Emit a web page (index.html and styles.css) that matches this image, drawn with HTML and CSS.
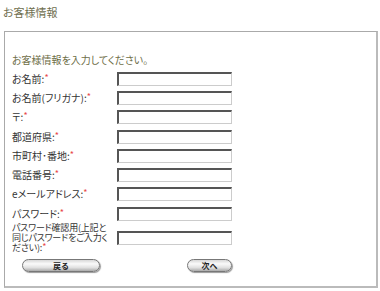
FILE: index.html
```html
<!DOCTYPE html>
<html lang="ja">
<head>
    <meta charset="UTF-8">
    <title>お客様情報</title>
    <link rel="stylesheet" href="styles.css">
</head>
<body>
    <!-- Title -->
    <h1 class="page-title">お客様情報</h1>

    <!-- Form Box -->
    <div class="form-box">
        <p class="lead">お客様情報を入力してください。</p>
        <form class="info-form">
            <div class="row">
                <label>お名前:<span class="req">*</span></label>
                <input type="text">
            </div>
            <div class="row">
                <label>お名前(フリガナ):<span class="req">*</span></label>
                <input type="text">
            </div>
            <div class="row">
                <label>〒:<span class="req">*</span></label>
                <input type="text">
            </div>
            <div class="row">
                <label>都道府県:<span class="req">*</span></label>
                <input type="text">
            </div>
            <div class="row">
                <label>市町村･番地:<span class="req">*</span></label>
                <input type="text">
            </div>
            <div class="row">
                <label>電話番号:<span class="req">*</span></label>
                <input type="text">
            </div>
            <div class="row">
                <label>eメールアドレス:<span class="req">*</span></label>
                <input type="text">
            </div>
            <div class="row">
                <label>パスワード:<span class="req">*</span></label>
                <input type="password">
            </div>
            <div class="row row-tall">
                <label class="label-long">パスワード確認用(上記と<br>同じパスワードをご入力く<br>ださい):<span class="req">*</span></label>
                <input type="password">
            </div>
            <div class="buttons">
                <button type="button" class="btn btn-back">戻る</button>
                <button type="button" class="btn btn-next">次へ</button>
            </div>
        </form>
    </div>
</body>
</html>
```

FILE: styles.css
```css
/* Reset */
* {
    margin: 0;
    padding: 0;
    box-sizing: border-box;
}

body {
    font-family: "Noto Sans CJK JP", "Noto Sans", sans-serif;
    font-feature-settings: "palt";
    background: #fff;
    color: #333;
}

/* Title */
.page-title {
    font-size: 11px;
    line-height: 12px;
    font-weight: normal;
    color: #6e6e4e;
    padding: 6px 0 0 3px;
}

/* Form Box */
.form-box {
    margin: 13px 0 0 4px;
    width: 374px;
    height: 257px;
    border-top: 1px solid #aaa;
    border-left: 1px solid #aaa;
    border-right: 2px solid #bbb;
    border-bottom: 2px solid #bbb;
    padding: 22px 0 0 7px;
}

.lead {
    font-size: 10px;
    line-height: 12px;
    color: #6e6e48;
    margin-bottom: 3px;
}

/* Rows */
.row {
    display: flex;
    align-items: center;
    height: 19.3px;
}

.row label {
    width: 105px;
    font-size: 10px;
    line-height: 10px;
    white-space: nowrap;
    color: #333;
}

.row .label-long {
    font-size: 9px;
    letter-spacing: -0.2px;
}

.row-tall {
    height: 30px;
}

.req {
    color: #e84848;
    font-size: 9px;
    line-height: 8px;
    vertical-align: top;
}

input {
    width: 115px;
    height: 14px;
    border-top: 2px solid #555;
    border-left: 2px solid #555;
    border-right: 1px solid #ccc;
    border-bottom: 1px solid #ccc;
    background: #fff;
}

/* Buttons */
.buttons {
    display: flex;
    gap: 87px;
    margin: 6px 0 0 10px;
}

.btn {
    height: 13px;
    border: 1px solid #777;
    border-radius: 7px;
    background: linear-gradient(to bottom, #d8d8d8 0%, #fafafa 35%, #e0e0e0 70%, #aaa 100%);
    box-shadow: 1px 1px 1px #999;
    font-family: inherit;
    font-size: 8px;
    font-weight: bold;
    line-height: 11px;
    color: #222;
    cursor: pointer;
}

.btn-back {
    width: 78px;
}

.btn-next {
    width: 45px;
}
```
